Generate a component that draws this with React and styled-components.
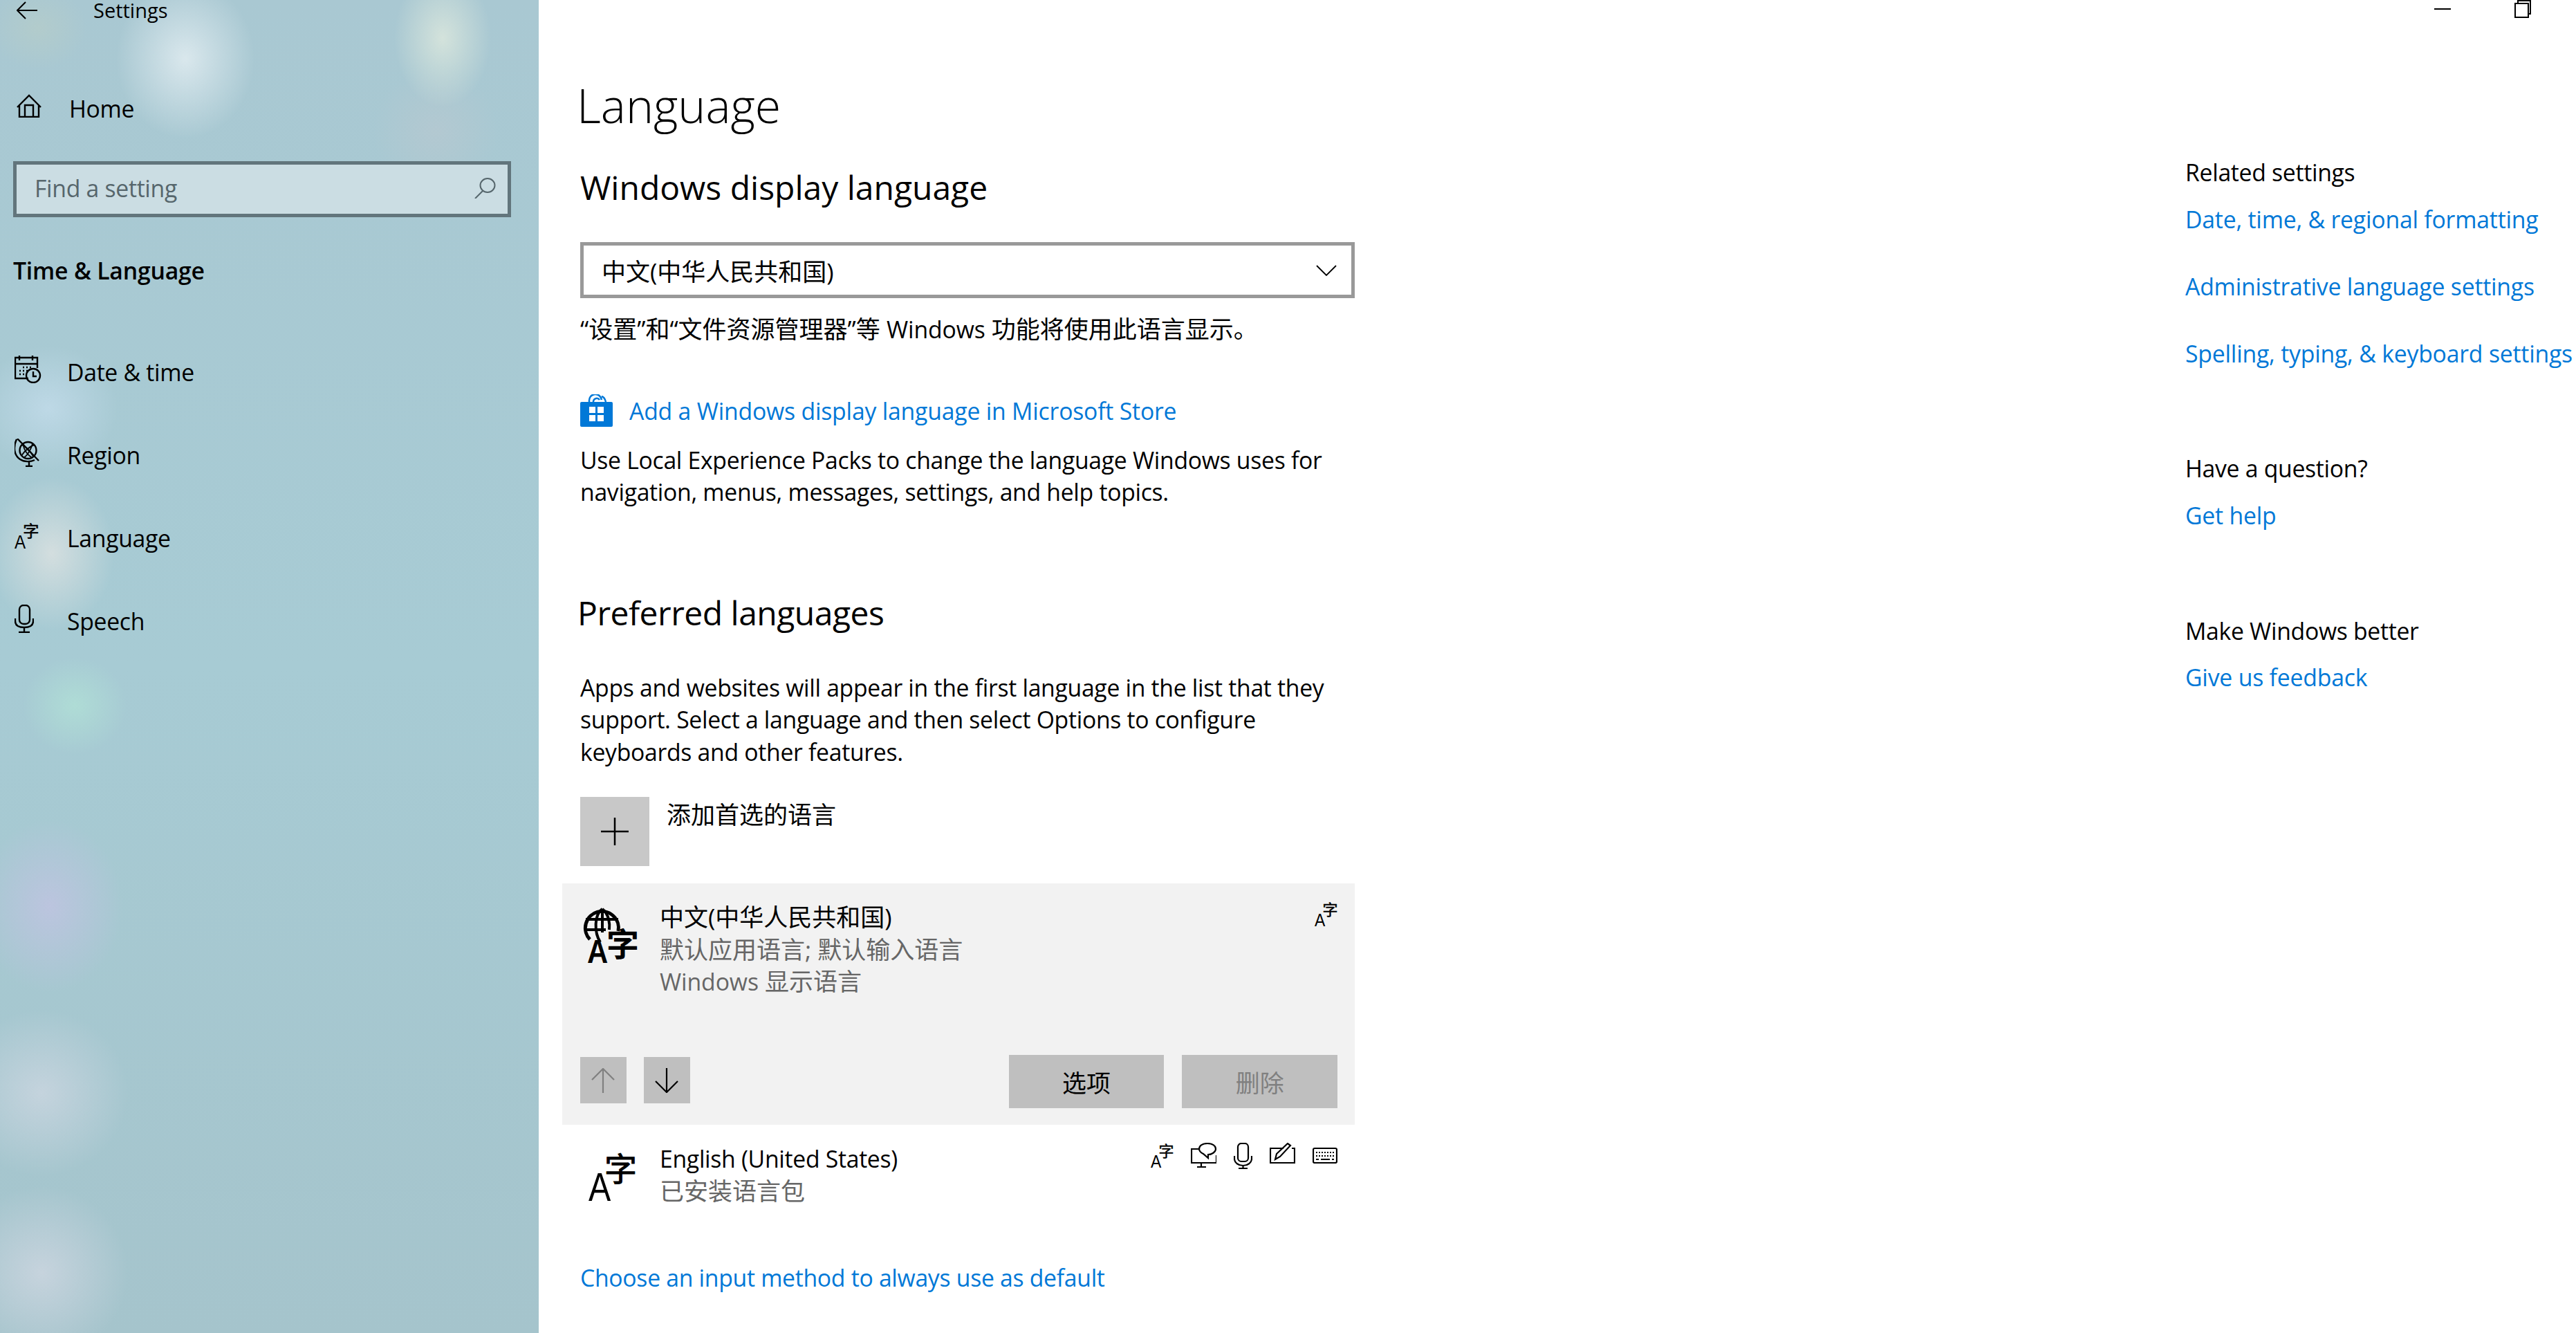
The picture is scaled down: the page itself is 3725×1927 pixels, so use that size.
import React from "react";
import styled, { createGlobalStyle } from "styled-components";

const FONT = `"Open Sans", "Noto Sans CJK SC", sans-serif`;
const BLUE = "#0078d7";

const Global = createGlobalStyle`
  html, body { margin: 0; padding: 0; background: #fff; }
  body { font-family: ${FONT}; font-size: 33.75px; color: #000; letter-spacing: -.3px; }
  * { box-sizing: border-box; }
`;

const Page = styled.div`
  width: 3725px; height: 1927px; display: flex; overflow: hidden; background: #fff;
`;

const Sidebar = styled.nav`
  width: 779px; flex: none; display: flex; flex-direction: column;
  background:
    radial-gradient(ellipse 100px 115px at 268px 85px, rgba(220,233,238,.95), rgba(220,233,238,0)),
    radial-gradient(ellipse 70px 100px at 640px 55px, rgba(214,228,220,.95), rgba(214,228,220,0)),
    radial-gradient(ellipse 90px 90px at 630px 190px, rgba(186,200,208,.6), rgba(186,200,208,0)),
    radial-gradient(ellipse 70px 60px at 55px 40px, rgba(190,208,196,.45), rgba(190,208,196,0)),
    radial-gradient(ellipse 100px 90px at 70px 590px, rgba(192,218,232,.9), rgba(192,218,232,0)),
    radial-gradient(ellipse 90px 110px at 75px 800px, rgba(216,224,224,.9), rgba(216,224,224,0)),
    radial-gradient(ellipse 75px 70px at 108px 1020px, rgba(176,222,214,.9), rgba(176,222,214,0)),
    radial-gradient(ellipse 105px 125px at 72px 1310px, rgba(190,196,224,.9), rgba(190,196,224,0)),
    radial-gradient(ellipse 125px 120px at 60px 1580px, rgba(198,212,222,.95), rgba(198,212,222,0)),
    radial-gradient(ellipse 125px 125px at 60px 1840px, rgba(200,212,222,.95), rgba(200,212,222,0)),
    linear-gradient(180deg, #a9c8d2 0%, #a7cbd4 50%, #a5c4cc 100%);
`;

const TitleBar = styled.div`
  height: 30px; display: flex; align-items: center; padding-left: 24px; font-size: 29px; letter-spacing: 0;
`;
const TitleText = styled.span`margin-left: 81px; line-height: 30px;`;

const NavRow = styled.div`
  height: 120px; display: flex; align-items: center; padding-left: ${p => p.$pad}px; color: #000; flex: none;
`;
const HomeRow = styled(NavRow)`margin-top: 67px;`;
const IconSlot = styled.span`
  width: ${p => p.$w}px; flex: none; display: flex; align-items: center; margin-bottom: 8px;
`;
const NavList = styled.div`margin-top: 57px; display: flex; flex-direction: column;`;

const SearchBox = styled.div`
  margin: 16px 0 0 19px; width: 720px; height: 81px; border: 5px solid #62757c;
  background: #cbdde3; display: flex; align-items: center; justify-content: space-between;
  padding: 0 17px 4px 26px; color: #56666c;
`;
const SectionName = styled.div`
  margin: 47px 0 0 19px; height: 60px; line-height: 60px; font-weight: 600; letter-spacing: -.2px;
`;

const Main = styled.main`flex: 1; display: flex; flex-direction: column; min-width: 0;`;
const WindowBar = styled.div`
  height: 26px; display: flex; justify-content: flex-end; align-items: flex-start; padding-right: 65px; gap: 92px; flex: none;
`;
const Columns = styled.div`display: flex; flex: 1; min-height: 0;`;
const Content = styled.section`width: 1180px; flex: none; padding-left: 60px;`;
const Aside = styled.aside`margin-left: 1201px; width: 565px; flex: none;`;

const PageTitle = styled.h1`
  margin: 84px 0 0 -5px; height: 84px; line-height: 84px; font-size: 68px; font-weight: 300; letter-spacing: 0;
`;
const SubTitle = styled.h2`
  margin: ${p => p.$top}px 0 0 ${p => p.$left}px; height: 62px; line-height: 62px; font-size: 48px; font-weight: 400;
  letter-spacing: ${p => p.$sp || 0}px;
`;
const Select = styled.div`
  margin-top: 48px; width: 1120px; height: 81px; border: 5px solid #999; display: flex; align-items: center;
  justify-content: space-between; padding: 0 21px 0 26px; font-size: 35px; letter-spacing: 0;
`;
const Body = styled.p`
  margin: ${p => p.$top || 0}px 0 0; line-height: 46.5px; width: 1120px;
`;
const HelperText = styled(Body)`font-size: 35px; letter-spacing: 0;`;
const LatinRun = styled.span`font-size: 33.75px; letter-spacing: -.1px;`;
const StoreLink = styled.div`
  margin-top: 70px; height: 48px; display: flex; align-items: center; gap: 24px; color: ${BLUE}; line-height: 48px; letter-spacing: -.2px;
`;
const AddRow = styled.div`margin-top: 42px; display: flex; gap: 25px; height: 100px;`;
const AddButton = styled.div`
  width: 100px; height: 100px; background: #c8c8c8; display: flex; align-items: center; justify-content: center;
`;
const AddLabel = styled.span`line-height: 52px; letter-spacing: 0; font-size: 35px;`;

const LangPanel = styled.div`
  margin: 25px 0 0 -26px; width: 1146px; height: 349px; background: #f2f2f2;
  padding: 26px 25px 0 26px; display: flex; flex-direction: column;
`;
const LangTop = styled.div`display: flex; align-items: flex-start; height: 222px;`;
const LangIcon = styled.span`width: 115px; padding: 9px 0 0 5px; flex: none;`;
const LangText = styled.div`flex: 1; min-width: 0;`;
const LangName = styled.div`line-height: 46.5px; font-size: ${p => p.$latin ? 33.75 : 35}px; letter-spacing: ${p => p.$latin ? -0.3 : 0}px;`;
const LangMeta = styled.div`line-height: 46.5px; color: #666; letter-spacing: 0; font-size: 35px;`;
const Tools = styled.div`display: flex; gap: 25px; align-items: flex-start; flex: none;`;
const LangActions = styled.div`display: flex; align-items: flex-start;`;
const ArrowButton = styled.div`
  width: 67px; height: 67px; background: #bfbfbf; margin: 3px 25px 0 0; display: flex; align-items: center; justify-content: center;
`;
const ActionButton = styled.div`
  width: 225px; height: 77px; background: #bfbfbf; display: flex; align-items: center; justify-content: center;
  margin-left: ${p => p.$left}px; color: ${p => p.$off ? "#808080" : "#000"}; letter-spacing: 0; font-size: 35px;
`;
const LangRow = styled.div`
  margin-left: -26px; width: 1146px; height: 139px; padding: 26px 25px 0 37px; display: flex; align-items: flex-start;
`;
const PlainIcon = styled.span`width: 104px; flex: none; padding-top: 11px;`;
const BottomLink = styled.div`margin-top: 59px; color: ${BLUE}; line-height: 46px;`;

const AsideHead = styled.div`line-height: 46px; margin-top: ${p => p.$top || 0}px;`;
const AsideLink = styled.div`line-height: 46px; color: ${BLUE}; margin-top: ${p => p.$top}px; white-space: nowrap; letter-spacing: -.2px;`;
const GlyphSvg = styled.svg`overflow: visible; display: block;`;

const sw = { fill: "none", stroke: "currentColor" };

const Back = () => (
  <svg width="30" height="26" viewBox="0 0 30 26" {...sw} strokeWidth="2"><path d="M1 13H30M13 1 1 13l12 12" /></svg>
);
const HomeIcon = () => (
  <svg width="36" height="34" viewBox="0 0 36 34" {...sw} strokeWidth="2.4"><path d="M1 19 18 2l17 17M4 16v17h28V16M12 33V16h12v17" /></svg>
);
const SearchIcon = () => (
  <svg width="31" height="30" viewBox="0 0 31 30" {...sw} strokeWidth="2"><ellipse cx="19" cy="11" rx="10.5" ry="10" /><path d="M12 19 1 30" /></svg>
);
const Calendar = () => (
  <svg width="39" height="40" viewBox="0 0 39 40" {...sw} strokeWidth="2.4">
    <path d="M20 33H1V3h32v15M1 12h32M7 0v7M26 0v7" />
    <circle cx="27" cy="29" r="10" />
    <path d="M27 23v7h5" />
    <path d="M12 17h2M17 17h2M22 17h2M7 22h2M12 22h2M17 22h2M7 27h2M12 27h2" strokeWidth="2.4" />
  </svg>
);
const Globe = () => (
  <svg width="36" height="41" viewBox="0 0 36 41" {...sw} strokeWidth="2.4">
    <circle cx="19.500" cy="17" r="12" />
    <path d="M10 9c6 2 14 10 17 17M29 9c-5 1-16 10-18 15M13 7c-1 6 4 16 13 21M26 6c0 4-6 18-12 21" strokeWidth="1.800" />
    <path d="M3 1C-2 12-1 24 8 30c6 4 15 4 21 1M4 0l31 32M21 34v6M16 40h10" />
  </svg>
);
const MicIcon = () => (
  <svg width="28" height="41" viewBox="0 0 28 41" {...sw} strokeWidth="2.4">
    <rect x="7" y="1" width="15" height="27" rx="6" /><path d="M1 20v4c0 6 5 9 13 9s13-3 13-9v-4M14 33v6M6 40h16" />
  </svg>
);
const LangGlyph = ({ w = 33, h = 36 }) => (
  <GlyphSvg width={w} height={h} viewBox="0 0 33 36">
    <text x="0" y="36" fontFamily="Liberation Sans" fontSize="26" textLength="15" lengthAdjust="spacingAndGlyphs">A</text>
    <text x="11.500" y="19.500" fontFamily="Noto Sans CJK SC" fontSize="22" stroke="#000" strokeWidth=".5">字</text>
  </GlyphSvg>
);
const GlobeLangGlyph = () => (
  <GlyphSvg width="80" height="80" viewBox="0 0 80 80">
    <g fill="none" stroke="#000" strokeWidth="5">
      <path d="M9 46A24 24 0 1 1 50 34" />
      <path d="M27 2C15 10 15 36 24 50M27 2c10 8 11 22 10 30M3 17h47M2 32h30M27 2v34" strokeWidth="4" />
    </g>
    <text x="5" y="80" fontFamily="Liberation Sans" fontSize="48" textLength="30" lengthAdjust="spacingAndGlyphs" fontWeight="700">A</text>
    <text x="33" y="70" fontFamily="Noto Sans CJK SC" fontWeight="700" fontSize="47">字</text>
  </GlyphSvg>
);
const PlainLangGlyph = () => (
  <GlyphSvg width="72" height="78" viewBox="0 0 72 78">
    <text x="1" y="73" fontFamily="Liberation Sans" fontSize="57" textLength="32" lengthAdjust="spacingAndGlyphs">A</text>
    <text x="24" y="44" fontFamily="Noto Sans CJK SC" fontSize="47" stroke="#000" strokeWidth="1">字</text>
  </GlyphSvg>
);
const Chevron = () => (
  <svg width="30" height="16" viewBox="0 0 30 16" {...sw} strokeWidth="1.8"><path d="M1 1l14 14L29 1" /></svg>
);
const Store = () => (
  <svg width="47" height="47" viewBox="0 0 47 47">
    <path d="M2 11h43a2 2 0 0 1 2 2v32a2 2 0 0 1-2 2H2a2 2 0 0 1-2-2V13a2 2 0 0 1 2-2z" fill={BLUE} />
    <path d="M13 11V10a9 9 0 0 1 18-2M31 3c4 1 5 4 6 8M19 11V10a5 5 0 0 1 9-2" fill="none" stroke={BLUE} strokeWidth="2.500" />
    <path d="M13 18h9v9h-9zM25 18h9v9h-9zM13 30h9v9h-9zM25 30h9v9h-9z" fill="#fff" />
  </svg>
);
const Plus = () => (
  <svg width="40" height="40" viewBox="0 0 40 40" stroke="#000" strokeWidth="2.500"><path d="M0 20h40M20 0v40" /></svg>
);
const ArrowSvg = styled.svg`transform: ${p => p.$up ? "none" : "rotate(180deg)"};`;
const Arrow = ({ up, color }) => (
  <ArrowSvg $up={up} width="34" height="36" viewBox="0 0 34 36" fill="none" stroke={color} strokeWidth="2.200">
    <path d="M17 36V1M1 17 17 1l16 16" />
  </ArrowSvg>
);
const Monitor = () => (
  <svg width="37" height="37" viewBox="0 0 37 37" {...sw} strokeWidth="2.200">
    <path d="M11 9H1v20h36V18M15 29v6M9 35h13" />
    <path d="M24 1c7 0 12 3 12 8 0 4-5 8-11 8v5l-7-6c-4-2-6-4-6-7 0-5 5-8 12-8z" />
  </svg>
);
const SmallMic = () => (
  <svg width="27" height="38" viewBox="0 0 27 38" {...sw} strokeWidth="2.200">
    <rect x="6" y="1" width="15" height="26" rx="5" /><path d="M1 19v4c0 6 6 10 12.500 10s12.500-4 12.500-10v-4M13.500 33v4M7 37h13" />
  </svg>
);
const Pen = () => (
  <svg width="37" height="30" viewBox="0 0 37 30" {...sw} strokeWidth="2.200">
    <path d="M20 8H1v21h35V8h-4" /><path d="M8 24l2-8L26 1l4 3-15 16-7 4z" />
  </svg>
);
const Keyboard = () => (
  <svg width="36" height="30" viewBox="0 -7 36 30" {...sw} strokeWidth="2.200">
    <rect x="1" y="1" width="34" height="21" rx="2" />
    <path d="M5 7h26M5 12h26" strokeDasharray="2 2" strokeWidth="2" />
    <path d="M5 17h4M12 17h13M28 17h3" strokeWidth="2" />
  </svg>
);
const Minimize = () => (
  <svg width="24" height="14" viewBox="0 0 24 14" stroke="#000" strokeWidth="2"><path d="M0 13h24" /></svg>
);
const Restore = () => (
  <svg width="24" height="26" viewBox="0 0 24 26" fill="none" stroke="#000" strokeWidth="2"><path d="M5 5V1h18v19h-3" /><rect x="1" y="5" width="19" height="20" /></svg>
);

const nav = [
  ["Date & time", <Calendar />],
  ["Region", <Globe />],
  ["Language", <LangGlyph w={35} h={38} />],
  ["Speech", <MicIcon />],
];

const related = [
  ["Related settings", [["Date, time, & regional formatting", 22], ["Administrative language settings", 51], ["Spelling, typing, & keyboard settings", 51]], 200],
  ["Have a question?", [["Get help", 22]], 120],
  ["Make Windows better", [["Give us feedback", 21]], 121],
];

export default function App() {
  return (
    <Page>
      <Global />
      <Sidebar>
        <TitleBar><Back /><TitleText>Settings</TitleText></TitleBar>
        <HomeRow $pad={24}><IconSlot $w={76}><HomeIcon /></IconSlot>Home</HomeRow>
        <SearchBox>Find a setting<SearchIcon /></SearchBox>
        <SectionName>Time &amp; Language</SectionName>
        <NavList>
          {nav.map(([label, icon]) => (
            <NavRow key={label} $pad={21}><IconSlot $w={76}>{icon}</IconSlot>{label}</NavRow>
          ))}
        </NavList>
      </Sidebar>
      <Main>
        <WindowBar><Minimize /><Restore /></WindowBar>
        <Columns>
          <Content>
            <PageTitle>Language</PageTitle>
            <SubTitle $top={46} $left={0}>Windows display language</SubTitle>
            <Select>中文(中华人民共和国)<Chevron /></Select>
            <HelperText $top={22}>“设置”和“文件资源管理器”等 <LatinRun>Windows</LatinRun> 功能将使用此语言显示。</HelperText>
            <StoreLink><Store />Add a Windows display language in Microsoft Store</StoreLink>
            <Body $top={24}>Use Local Experience Packs to change the language Windows uses for navigation, menus, messages, settings, and help topics.</Body>
            <SubTitle $top={120} $left={-4} $sp={-0.5}>Preferred languages</SubTitle>
            <Body $top={54}>Apps and websites will appear in the first language in the list that they support. Select a language and then select Options to configure keyboards and other features.</Body>
            <AddRow><AddButton><Plus /></AddButton><AddLabel>添加首选的语言</AddLabel></AddRow>
            <LangPanel>
              <LangTop>
                <LangIcon><GlobeLangGlyph /></LangIcon>
                <LangText>
                  <LangName>中文(中华人民共和国)</LangName>
                  <LangMeta>默认应用语言; 默认输入语言</LangMeta>
                  <LangMeta><LatinRun>Windows</LatinRun> 显示语言</LangMeta>
                </LangText>
                <Tools><LangGlyph /></Tools>
              </LangTop>
              <LangActions>
                <ArrowButton><Arrow up color="#808080" /></ArrowButton>
                <ArrowButton><Arrow color="#000" /></ArrowButton>
                <ActionButton $left={436}>选项</ActionButton>
                <ActionButton $left={26} $off>删除</ActionButton>
              </LangActions>
            </LangPanel>
            <LangRow>
              <PlainIcon><PlainLangGlyph /></PlainIcon>
              <LangText>
                <LangName $latin>English (United States)</LangName>
                <LangMeta>已安装语言包</LangMeta>
              </LangText>
              <Tools><LangGlyph /><Monitor /><SmallMic /><Pen /><Keyboard /></Tools>
            </LangRow>
            <BottomLink>Choose an input method to always use as default</BottomLink>
          </Content>
          <Aside>
            {related.map(([head, links, top]) => (
              <React.Fragment key={head}>
                <AsideHead $top={top}>{head}</AsideHead>
                {links.map(([t, m]) => <AsideLink key={t} $top={m}>{t}</AsideLink>)}
              </React.Fragment>
            ))}
          </Aside>
        </Columns>
      </Main>
    </Page>
  );
}
